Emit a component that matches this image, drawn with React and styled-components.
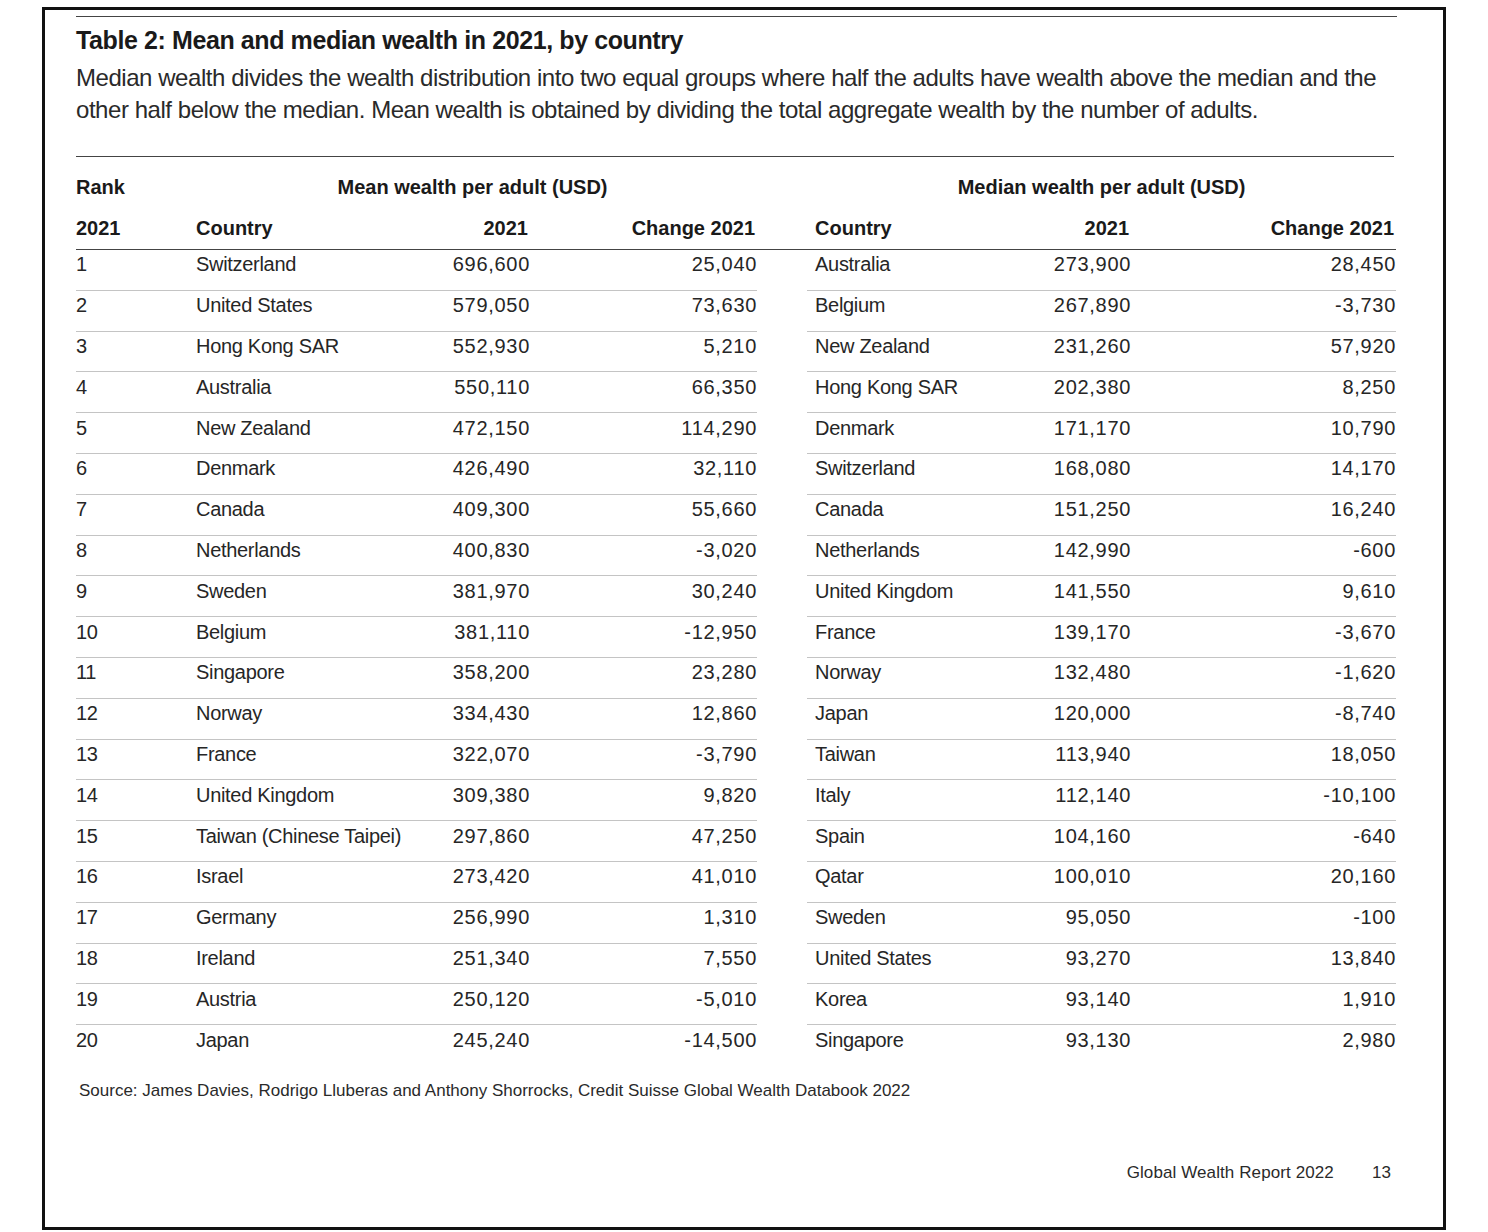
import React from "react";
import styled, { createGlobalStyle } from "styled-components";

const GlobalStyle = createGlobalStyle`
  html, body {
    margin: 0;
    padding: 0;
    background: #fff;
  }
  body {
    font-family: "Liberation Sans", Arial, sans-serif;
    color: #222;
  }
`;

const Page = styled.div`
  width: 1488px;
  height: 1232px;
  padding: 7px 0 0 42px;
  box-sizing: border-box;
`;

const Frame = styled.div`
  width: 1404px;
  height: 1223px;
  box-sizing: border-box;
  border: 3px solid #111;
  padding: 6px 49px 0 31px;
  display: flex;
  flex-direction: column;
`;

const Rule = styled.hr`
  margin: 0;
  border: 0;
  border-top: 1px solid #444;
  width: ${p => p.width || 1321}px;
`;

const Title = styled.h2`
  margin: 8px 0 0;
  font-size: 25px;
  line-height: 30px;
  font-weight: 700;
  color: #1a1a1a;
  letter-spacing: -0.4px;
`;

const Intro = styled.p`
  margin: 7px 0 30px;
  font-size: 24px;
  line-height: 32px;
  color: #2a2a2a;
  letter-spacing: -0.45px;
  white-space: nowrap;
`;

const Table = styled.table`
  width: 1320px;
  table-layout: fixed;
  border-collapse: collapse;
  font-size: 20px;
  margin-top: 10px;
`;

const HeadCell = styled.th`
  font-weight: 700;
  color: #1a1a1a;
  text-align: ${p => p.align || "left"};
  padding: ${p => p.pad || "0"};
  height: ${p => p.h || 40}px;
  white-space: nowrap;
  border-bottom: ${p => (p.rule ? "1px solid #444" : "none")};
`;

const Row = styled.tr`
  height: 40.8px;
  & + & td {
    border-top: 1px solid #c4c4c4;
  }
`;

const Cell = styled.td`
  text-align: ${p => (p.num ? "right" : "left")};
  padding: ${p => p.pad || "0"};
  padding-bottom: 10px;
  color: #262626;
  white-space: nowrap;
  letter-spacing: ${p => (p.num ? "0.7px" : "-0.3px")};
`;

const Spacer = styled.td`
  border-top: none !important;
`;

const Source = styled.div`
  margin: 16px 0 0 3px;
  font-size: 17px;
  color: #2a2a2a;
  letter-spacing: 0;
`;

const Footer = styled.div`
  margin-top: 62px;
  display: flex;
  justify-content: flex-end;
  gap: 38px;
  font-size: 17px;
  color: #2a2a2a;
  width: 1315px;
  letter-spacing: 0.1px;
`;

const rows = [
  [1, "Switzerland", "696,600", "25,040", "Australia", "273,900", "28,450"],
  [2, "United States", "579,050", "73,630", "Belgium", "267,890", "-3,730"],
  [3, "Hong Kong SAR", "552,930", "5,210", "New Zealand", "231,260", "57,920"],
  [4, "Australia", "550,110", "66,350", "Hong Kong SAR", "202,380", "8,250"],
  [5, "New Zealand", "472,150", "114,290", "Denmark", "171,170", "10,790"],
  [6, "Denmark", "426,490", "32,110", "Switzerland", "168,080", "14,170"],
  [7, "Canada", "409,300", "55,660", "Canada", "151,250", "16,240"],
  [8, "Netherlands", "400,830", "-3,020", "Netherlands", "142,990", "-600"],
  [9, "Sweden", "381,970", "30,240", "United Kingdom", "141,550", "9,610"],
  [10, "Belgium", "381,110", "-12,950", "France", "139,170", "-3,670"],
  [11, "Singapore", "358,200", "23,280", "Norway", "132,480", "-1,620"],
  [12, "Norway", "334,430", "12,860", "Japan", "120,000", "-8,740"],
  [13, "France", "322,070", "-3,790", "Taiwan", "113,940", "18,050"],
  [14, "United Kingdom", "309,380", "9,820", "Italy", "112,140", "-10,100"],
  [15, "Taiwan (Chinese Taipei)", "297,860", "47,250", "Spain", "104,160", "-640"],
  [16, "Israel", "273,420", "41,010", "Qatar", "100,010", "20,160"],
  [17, "Germany", "256,990", "1,310", "Sweden", "95,050", "-100"],
  [18, "Ireland", "251,340", "7,550", "United States", "93,270", "13,840"],
  [19, "Austria", "250,120", "-5,010", "Korea", "93,140", "1,910"],
  [20, "Japan", "245,240", "-14,500", "Singapore", "93,130", "2,980"]
];

const widths = [112, 232, 110, 227, 50, 193, 131, 265];

export default function App() {
  return (
    <>
      <GlobalStyle />
      <Page>
        <Frame>
          <Rule />
          <Title>Table 2: Mean and median wealth in 2021, by country</Title>
          <Intro>
            Median wealth divides the wealth distribution into two equal groups where half the adults have wealth above the median and the
            <br />
            other half below the median. Mean wealth is obtained by dividing the total aggregate wealth by the number of adults.
          </Intro>
          <Rule width={1318} />
          <Table>
            <colgroup>
              {widths.map((w, i) => (
                <col key={i} style={{ width: w }} />
              ))}
            </colgroup>
            <thead>
              <tr>
                <HeadCell>Rank</HeadCell>
                <HeadCell colSpan={3} align="center">
                  Mean wealth per adult (USD)
                </HeadCell>
                <HeadCell />
                <HeadCell colSpan={3} align="center">
                  Median wealth per adult (USD)
                </HeadCell>
              </tr>
              <tr>
                <HeadCell rule h={42}>2021</HeadCell>
                <HeadCell rule h={42} pad="0 0 0 8px">Country</HeadCell>
                <HeadCell rule h={42} align="right" pad="0 2px 0 0">2021</HeadCell>
                <HeadCell rule h={42} align="right" pad="0 2px 0 0">Change 2021</HeadCell>
                <HeadCell rule h={42} />
                <HeadCell rule h={42} pad="0 0 0 8px">Country</HeadCell>
                <HeadCell rule h={42} align="right" pad="0 2px 0 0">2021</HeadCell>
                <HeadCell rule h={42} align="right" pad="0 2px 0 0">Change 2021</HeadCell>
              </tr>
            </thead>
            <tbody>
              {rows.map(r => (
                <Row key={r[0]}>
                  <Cell>{r[0]}</Cell>
                  <Cell pad="0 0 0 8px">{r[1]}</Cell>
                  <Cell num>{r[2]}</Cell>
                  <Cell num>{r[3]}</Cell>
                  <Spacer />
                  <Cell pad="0 0 0 8px">{r[4]}</Cell>
                  <Cell num>{r[5]}</Cell>
                  <Cell num>{r[6]}</Cell>
                </Row>
              ))}
            </tbody>
          </Table>
          <Source>
            Source: James Davies, Rodrigo Lluberas and Anthony Shorrocks, Credit Suisse Global Wealth Databook 2022
          </Source>
          <Footer>
            <span>Global Wealth Report 2022</span>
            <span>13</span>
          </Footer>
        </Frame>
      </Page>
    </>
  );
}
